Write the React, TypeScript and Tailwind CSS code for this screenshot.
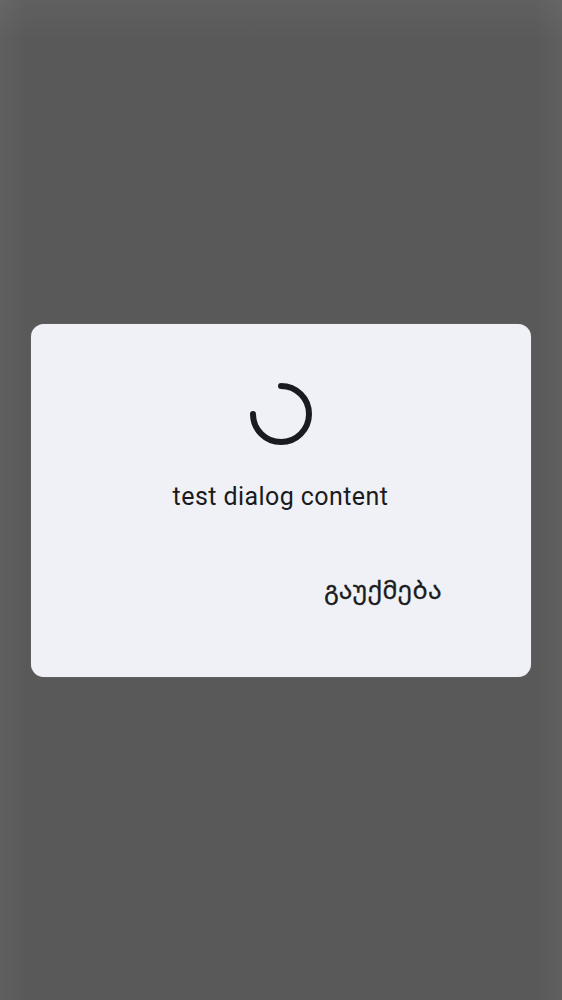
export default function App() {
  return (
    <main className="flex h-[1000px] w-[562px] items-center justify-center bg-[#595959] bg-[linear-gradient(to_bottom,rgba(255,255,255,0.045),transparent_40px),linear-gradient(to_right,rgba(255,255,255,0.04),transparent_28px,transparent_534px,rgba(255,255,255,0.04))] font-['Roboto','Noto_Sans',sans-serif] text-[#1a1b20]">
      <section role="dialog" className="flex h-[353px] w-[500px] flex-col items-center rounded-[13px] bg-[#f0f1f6] pt-[58.5px] shadow-[0_0_1px_rgba(255,255,255,0.4)]">
        <svg className="size-16 shrink-0" viewBox="0 0 64 64" fill="none">
          <path d="M32 4A28 28 0 1 1 4 32" stroke="currentColor" strokeWidth="6" strokeLinecap="round" />
        </svg>
        <p className="mt-[33px] mr-px text-[25px] leading-9 tracking-[0.43px]">test dialog content</p>
        <button className="mt-[56px] mr-[89px] self-end font-['Noto_Sans_Georgian','DejaVu_Sans',sans-serif] text-[25px] leading-9 font-normal tracking-[0.3px] [-webkit-text-stroke:0.3px_#1a1b20]">გაუქმება</button>
      </section>
    </main>
  );
}
